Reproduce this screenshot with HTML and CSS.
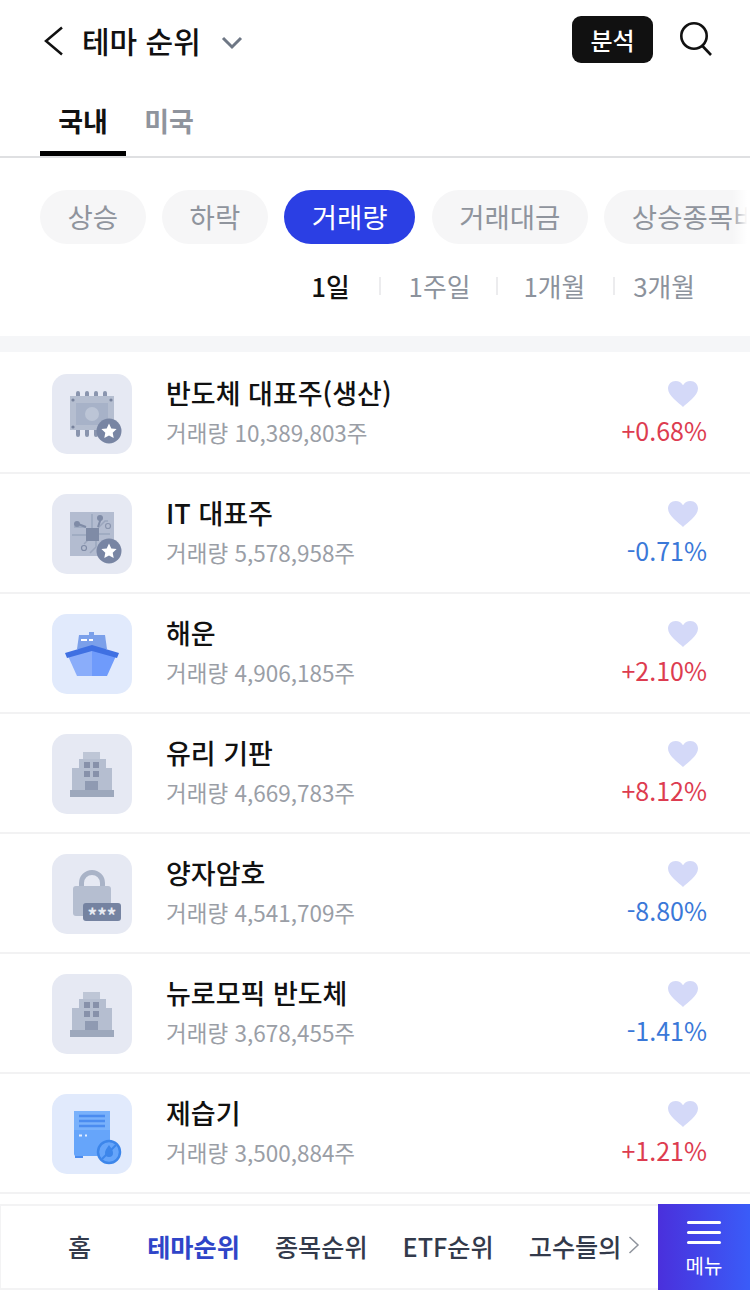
FILE: index.html
```html
<!DOCTYPE html>
<html lang="ko">
<head>
    <meta charset="UTF-8">
    <meta name="viewport" content="width=device-width, initial-scale=1.0">
    <title>테마 순위</title>
    <link rel="stylesheet" href="styles.css">
</head>
<body>

    <svg class="defs" width="0" height="0">
        <symbol id="heart" viewBox="0 0 30 26">
            <path d="M15 26C11 22 0 15 0 7.5 0 3 3.500 0 7.500 0 10.800 0 13.500 1.600 15 4.200 16.500 1.600 19.200 0 22.500 0 26.500 0 30 3 30 7.500 30 15 19 22 15 26Z"/>
        </symbol>
        <symbol id="star-badge" viewBox="0 0 26 26">
            <circle cx="13" cy="13" r="12.500" fill="#7885a3"/>
            <path d="M13 5.500l2.300 4.900 5.300.7-3.900 3.600 1 5.300-4.700-2.600-4.700 2.600 1-5.300-3.900-3.600 5.300-.7z" fill="#fff"/>
        </symbol>
        <symbol id="building" viewBox="0 0 80 80">
            <path d="M31 18h17v7h6v9h6v22H20V34h7v-9h4z" fill="#b5bed0"/>
            <path d="M31 18h17v7H31z" fill="#bec6d6"/>
            <path d="M32 28h6v6h-6zM41 28h6v6h-6zM32 37h6v6h-6zM41 37h6v6h-6z" fill="#8791aa"/>
            <path d="M33 47h13v9H33z" fill="#8f9ab2"/>
            <path d="M18 56h44v7H18z" fill="#9da8bc"/>
        </symbol>
    </svg>

    <header class="top-bar">
        <div class="title-wrap">
            <svg class="back" width="20" height="30" viewBox="0 0 20 30"><path d="M18 1.500L2 15l16 13.500"/></svg>
            <h1>테마 순위</h1>
            <svg class="caret" width="22" height="14" viewBox="0 0 22 14"><path d="M2 2l9 9 9-9"/></svg>
        </div>
        <button class="btn-analysis">분석</button>
        <svg class="search" width="34" height="38" viewBox="0 0 34 38">
            <circle cx="16" cy="15" r="12.700"/>
            <path d="M24.500 25L33 34"/>
        </svg>
    </header>

    <nav class="tabs">
        <a class="tab active">국내</a>
        <a class="tab">미국</a>
    </nav>

    <div class="pills-wrap">
        <div class="pills">
            <span class="pill">상승</span>
            <span class="pill">하락</span>
            <span class="pill selected">거래량</span>
            <span class="pill">거래대금</span>
            <span class="pill">상승종목비</span>
        </div>
    </div>

    <div class="periods">
        <span class="period on">1일</span>
        <span class="period">1주일</span>
        <span class="period">1개월</span>
        <span class="period">3개월</span>
    </div>

    <ul class="rank-list">
        <li class="rank-row">
            <div class="tile">
                <svg width="80" height="80" viewBox="0 0 80 80">
                    <path d="M26 19v6M35 19v6M44 19v6M53 19v6M26 54v7M35 54v7M44 54v7" stroke="#8a95ae" stroke-width="4" stroke-linecap="round"/>
                    <path d="M18 22h44v34H18z" fill="#b5bed0"/>
                    <path d="M24 29h32v22H24z" fill="#a7b2c8"/>
                    <circle cx="40" cy="40" r="7" fill="#bcc5d6"/>
                    <circle cx="21" cy="26" r="1.600" fill="#77829c"/>
                    <circle cx="59" cy="26" r="1.600" fill="#77829c"/>
                    <circle cx="21" cy="53" r="1.600" fill="#77829c"/>
                    <use href="#star-badge" x="44" y="44" width="26" height="26"/>
                </svg>
            </div>
            <div class="info">
                <strong class="name">반도체 대표주(생산)</strong>
                <span class="volume">거래량 10,389,803주</span>
            </div>
            <div class="side">
                <svg class="heart" width="30" height="26"><use href="#heart"/></svg>
                <span class="rate up">+0.68%</span>
            </div>
        </li>
        <li class="rank-row">
            <div class="tile">
                <svg width="80" height="80" viewBox="0 0 80 80">
                    <path d="M18 18h44v44H18z" fill="#b3bcd0"/>
                    <path d="M40 20v14M22 33h12M20 41h14M46 40h12M46 34l7-7h3M44 47v6l-6 6M36 46l-4 4" stroke="#9ba6bd" stroke-width="1.500" fill="none"/>
                    <path d="M34 34h13v13H34z" fill="#7f8ba6"/>
                    <path d="M34 33l-8-3M46 33l3-9" stroke="#7f8ba6" stroke-width="2" fill="none"/>
                    <circle cx="25" cy="30" r="3" fill="#7f8ba6"/>
                    <circle cx="48" cy="24" r="3" fill="#7f8ba6"/>
                    <circle cx="56" cy="32" r="2.500" fill="none" stroke="#8a95ae" stroke-width="1.200"/>
                    <circle cx="32" cy="54" r="2.500" fill="none" stroke="#7f8ba6" stroke-width="1.200"/>
                    <use href="#star-badge" x="44" y="44" width="26" height="26"/>
                </svg>
            </div>
            <div class="info">
                <strong class="name">IT 대표주</strong>
                <span class="volume">거래량 5,578,958주</span>
            </div>
            <div class="side">
                <svg class="heart" width="30" height="26"><use href="#heart"/></svg>
                <span class="rate down">-0.71%</span>
            </div>
        </li>
        <li class="rank-row">
            <div class="tile blue">
                <svg width="80" height="80" viewBox="0 0 80 80">
                    <path d="M37 18h5v3h-5z" fill="#7ba0ea"/>
                    <path d="M27 21h26l2 14H25z" fill="#7ba0ea"/>
                    <path d="M29 25h6v2h-6zM37 25h4v2h-4z" fill="#fff"/>
                    <path d="M16 42l24-6v26H25z" fill="#8aadfa"/>
                    <path d="M64 42l-24-6v26h15z" fill="#6f9bfb"/>
                    <path d="M13 39l27-8 27 8-2 5-25-7-25 7z" fill="#3f70e2"/>
                </svg>
            </div>
            <div class="info">
                <strong class="name">해운</strong>
                <span class="volume">거래량 4,906,185주</span>
            </div>
            <div class="side">
                <svg class="heart" width="30" height="26"><use href="#heart"/></svg>
                <span class="rate up">+2.10%</span>
            </div>
        </li>
        <li class="rank-row">
            <div class="tile">
                <svg width="80" height="80"><use href="#building"/></svg>
            </div>
            <div class="info">
                <strong class="name">유리 기판</strong>
                <span class="volume">거래량 4,669,783주</span>
            </div>
            <div class="side">
                <svg class="heart" width="30" height="26"><use href="#heart"/></svg>
                <span class="rate up">+8.12%</span>
            </div>
        </li>
        <li class="rank-row">
            <div class="tile">
                <svg width="80" height="80" viewBox="0 0 80 80">
                    <path d="M29.500 34v-5a10.500 10.500 0 0 1 21 0v5" fill="none" stroke="#a9b3c7" stroke-width="5"/>
                    <rect x="21" y="32" width="38" height="30" rx="3" fill="#b5bed0"/>
                    <rect x="31" y="49" width="38" height="18" rx="3" fill="#7583a1"/>
                    <text class="stars" x="50" y="69" text-anchor="middle">***</text>
                </svg>
            </div>
            <div class="info">
                <strong class="name">양자암호</strong>
                <span class="volume">거래량 4,541,709주</span>
            </div>
            <div class="side">
                <svg class="heart" width="30" height="26"><use href="#heart"/></svg>
                <span class="rate down">-8.80%</span>
            </div>
        </li>
        <li class="rank-row">
            <div class="tile">
                <svg width="80" height="80"><use href="#building"/></svg>
            </div>
            <div class="info">
                <strong class="name">뉴로모픽 반도체</strong>
                <span class="volume">거래량 3,678,455주</span>
            </div>
            <div class="side">
                <svg class="heart" width="30" height="26"><use href="#heart"/></svg>
                <span class="rate down">-1.41%</span>
            </div>
        </li>
        <li class="rank-row">
            <div class="tile blue">
                <svg width="80" height="80" viewBox="0 0 80 80">
                    <path d="M23 61h8v3h-8z" fill="#4b8cf0"/>
                    <path d="M22 17h36v19H22z" fill="#79b1fb"/>
                    <path d="M22 36h36v24a2 2 0 0 1-2 2H24a2 2 0 0 1-2-2z" fill="#66a5fa"/>
                    <path d="M27 22h26M27 27h26M27 32h26" stroke="#4b8cf0" stroke-width="2.500"/>
                    <path d="M27 41.500h3M33 41.500h2" stroke="#e3eefe" stroke-width="2"/>
                    <circle cx="57" cy="58" r="11" fill="#66a5fa" stroke="#3d86ea" stroke-width="2.500"/>
                    <path d="M50 65l14-14" stroke="#3d86ea" stroke-width="2"/>
                    <path d="M57 51c3 4 4 6 4 8a4 4 0 0 1-8 0c0-2 1-4 4-8z" fill="#3d86ea"/>
                </svg>
            </div>
            <div class="info">
                <strong class="name">제습기</strong>
                <span class="volume">거래량 3,500,884주</span>
            </div>
            <div class="side">
                <svg class="heart" width="30" height="26"><use href="#heart"/></svg>
                <span class="rate up">+1.21%</span>
            </div>
        </li>
    </ul>

    <footer class="bottom-nav">
        <div class="nav-links">
            <a class="nav-link home">홈</a>
            <a class="nav-link current">테마순위</a>
            <a class="nav-link">종목순위</a>
            <a class="nav-link">ETF순위</a>
            <a class="nav-link">고수들의</a>
            <svg class="more" width="12" height="20" viewBox="0 0 12 20"><path d="M1.500 2L10 10l-8.500 8"/></svg>
        </div>
        <button class="btn-menu">
            <span class="bars"><i></i><i></i><i></i></span>
            메뉴
        </button>
    </footer>

</body>
</html>
```

FILE: styles.css
```css
* {
    box-sizing: border-box;
}
html, body {
    margin: 0;
    padding: 0;
}
body {
    width: 750px;
    height: 1290px;
    overflow: hidden;
    background-color: #fff;
    color: #111;
    font-family: "Noto Sans CJK KR", "Noto Sans", sans-serif;
}
button {
    border: none;
    font-family: inherit;
}
.defs {
    position: absolute;
}

/* top bar */
.top-bar {
    display: flex;
    align-items: center;
    height: 80px;
    padding: 0 38px 0 44px;
}
.title-wrap {
    display: flex;
    align-items: center;
    flex: 1;
}
.back {
    margin-top: 2px;
    fill: none;
    stroke: #111;
    stroke-width: 2.500;
}
h1 {
    margin: 0 0 0 18px;
    font-size: 30px;
    font-weight: 500;
    line-height: 40px;
}
.caret {
    margin: 6px 0 0 20px;
    fill: none;
    stroke: #6e7785;
    stroke-width: 3;
}
.btn-analysis {
    width: 81px;
    height: 47px;
    margin-bottom: 2px;
    border-radius: 9px;
    background-color: #111;
    color: #fff;
    font-size: 24px;
    font-weight: 500;
    padding: 0;
}
.search {
    margin-left: 25px;
    fill: none;
    stroke: #111;
    stroke-width: 2.600;
}

/* tabs */
.tabs {
    display: flex;
    height: 78px;
    padding-left: 40px;
    border-bottom: 2px solid #dfe0e2;
}
.tab {
    width: 86px;
    height: 76px;
    padding-top: 21px;
    text-align: center;
    font-size: 27px;
    font-weight: 700;
    line-height: 40px;
    color: #8f949d;
}
.tab.active {
    color: #111;
    border-bottom: 5px solid #000;
}

/* filter pills */
.pills-wrap {
    position: relative;
    overflow: hidden;
    padding: 32px 0 0 40px;
}
.pills-wrap::after {
    content: "";
    position: absolute;
    top: 0;
    right: 0;
    bottom: 0;
    width: 18px;
    background: linear-gradient(to right, rgba(255, 255, 255, 0), #fff 85%);
}
.pills {
    display: flex;
    gap: 16.500px;
    width: 900px;
}
.pill {
    height: 54px;
    padding: 0 27.500px;
    border-radius: 27px;
    background-color: #f6f6f7;
    color: #8f949d;
    font-size: 27.500px;
    line-height: 52px;
}
.pill.selected {
    background-color: #2b3fe4;
    color: #fff;
}

/* period switch */
.periods {
    display: flex;
    justify-content: flex-end;
    height: 92px;
    padding: 25px 55px 0 0;
}
.period {
    position: relative;
    font-size: 25.800px;
    line-height: 34px;
    color: #8c929c;
}
.period + .period {
    margin-left: 59px;
}
.period + .period::before {
    content: "";
    position: absolute;
    top: 8px;
    left: -30px;
    width: 2px;
    height: 18px;
    background-color: #ececee;
}
.period:nth-child(3) {
    margin-left: 53px;
}
.period:nth-child(3)::before {
    left: -27px;
}
.period:nth-child(4) {
    margin-left: 48px;
}
.period:nth-child(4)::before {
    left: -20px;
}
.period.on {
    color: #111;
    font-weight: 500;
}

/* list */
.rank-list {
    margin: 0;
    padding: 2px 0 0;
    list-style: none;
    border-top: 16px solid #f5f6f8;
}
.rank-row {
    display: flex;
    align-items: center;
    height: 120px;
    padding: 0 43px 0 52px;
    border-bottom: 2px solid #f2f2f3;
}
.tile {
    flex: none;
    width: 80px;
    height: 80px;
    margin-top: 2px;
    border-radius: 15px;
    background-color: #e6e9f3;
}
.tile.blue {
    background-color: #e1eafc;
}
.tile svg {
    display: block;
}
.stars {
    fill: #e8ebf2;
    font-size: 19px;
    font-weight: 700;
}
.info {
    flex: 1;
    display: flex;
    flex-direction: column;
    margin: 0 0 4px 34px;
}
.name {
    font-size: 27px;
    font-weight: 500;
    line-height: 38px;
    color: #111;
}
.volume {
    margin-top: 4px;
    font-size: 22.500px;
    line-height: 32px;
    color: #9a9ea6;
}
.side {
    display: flex;
    flex-direction: column;
    align-items: flex-end;
    margin-top: 2px;
}
.heart {
    margin: 0 9px 6px 0;
    fill: #d4d9f8;
}
.rate {
    font-size: 25px;
    line-height: 34px;
}
.rate.up {
    color: #dd3c50;
}
.rate.down {
    color: #3a78d8;
}

/* bottom nav */
.bottom-nav {
    display: flex;
    height: 86px;
    margin-top: 10px;
}
.nav-links {
    position: relative;
    display: flex;
    align-items: center;
    flex: 1;
    overflow: hidden;
    white-space: nowrap;
    border: 2px solid #f3f3f4;
    border-left-width: 1px;
    border-right: none;
    padding: 0 0 2px 67px;
    gap: 35px;
}
.nav-links::after {
    content: "";
    position: absolute;
    top: 0;
    right: 0;
    bottom: 0;
    width: 40px;
    background: linear-gradient(to right, rgba(255, 255, 255, 0), #fff 25%);
}
.nav-link {
    flex: none;
    font-size: 25.200px;
    font-weight: 500;
    color: #333a4b;
}
.nav-link.home {
    margin-right: 21px;
}
.nav-link.current {
    color: #2f45c8;
    font-weight: 700;
}
.more {
    position: absolute;
    top: 29px;
    right: 18px;
    z-index: 1;
    fill: none;
    stroke: #8f949d;
    stroke-width: 1.500;
}
.btn-menu {
    flex: none;
    display: flex;
    flex-direction: column;
    align-items: center;
    width: 92px;
    height: 86px;
    padding: 17px 0 0;
    background: linear-gradient(to right, #4a30dc, #3a5cf8);
    color: #fff;
    font-size: 20px;
    font-weight: 400;
    line-height: 28px;
}
.bars {
    display: flex;
    flex-direction: column;
    gap: 7px;
    margin-bottom: 8px;
}
.bars i {
    display: block;
    width: 34px;
    height: 3px;
    border-radius: 2px;
    background-color: #fff;
}
```
